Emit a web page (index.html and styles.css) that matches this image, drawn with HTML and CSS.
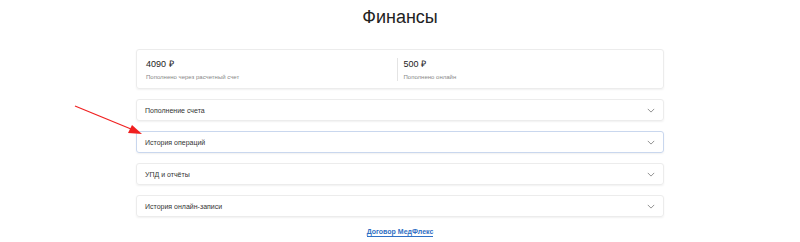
FILE: index.html
```html
<!DOCTYPE html>
<html lang="ru">
<head>
    <meta charset="UTF-8">
    <meta name="viewport" content="width=device-width, initial-scale=1.0">
    <title>Финансы</title>
    <link rel="stylesheet" href="styles.css">
</head>
<body>
    <div class="page">
        <h1 class="title">Финансы</h1>

        <div class="summary">
            <div class="summary-item">
                <div class="amount">4090 ₽</div>
                <div class="label">Пополнено через расчетный счет</div>
            </div>
            <div class="summary-item divided">
                <div class="amount">500 ₽</div>
                <div class="label">Пополнено онлайн</div>
            </div>
        </div>

        <div class="accordion">
            <div class="acc-item">
                <span>Пополнение счета</span>
                <svg class="chevron" viewBox="0 0 10 6"><path d="M1 1l4 4 4-4" /></svg>
            </div>
            <div class="acc-item active">
                <span>История операций</span>
                <svg class="chevron" viewBox="0 0 10 6"><path d="M1 1l4 4 4-4" /></svg>
            </div>
            <div class="acc-item">
                <span>УПД и отчёты</span>
                <svg class="chevron" viewBox="0 0 10 6"><path d="M1 1l4 4 4-4" /></svg>
            </div>
            <div class="acc-item">
                <span>История онлайн-записи</span>
                <svg class="chevron" viewBox="0 0 10 6"><path d="M1 1l4 4 4-4" /></svg>
            </div>
        </div>

        <a class="contract" href="#">Договор МедФлекс</a>
    </div>

    <svg class="pointer" width="800" height="242" viewBox="0 0 800 242">
        <line x1="75" y1="106" x2="131" y2="129" stroke="#f02020" stroke-width="1.2" />
        <polygon points="142,134 128,133 132,125" fill="#f02020" />
    </svg>
</body>
</html>
```

FILE: styles.css
```css
body {
    margin: 0;
    padding: 0;
    font-family: "Liberation Sans", Arial, sans-serif;
    background-color: #fff;
    color: #222;
    overflow: hidden;
}

.page {
    width: 528px;
    margin: 0 auto;
    display: flex;
    flex-direction: column;
    align-items: stretch;
}

.title {
    margin: 5px 0 0;
    height: 27px;
    font-size: 18px;
    font-weight: 400;
    line-height: 24px;
    text-align: center;
    color: #222;
}

.summary {
    margin-top: 17px;
    height: 40px;
    box-sizing: border-box;
    border: 1px solid #ececec;
    border-radius: 3px;
    box-shadow: 0 1px 2px rgba(0, 0, 0, 0.06);
    display: flex;
    align-items: center;
    padding: 0 9px;
}

.summary-item {
    flex: 1;
    display: flex;
    flex-direction: column;
    gap: 3px;
}

.summary-item.divided {
    border-left: 1px solid #e4e4e4;
    padding-left: 6px;
}

.amount {
    font-size: 9px;
    line-height: 12px;
    color: #222;
}

.label {
    font-size: 6px;
    line-height: 8px;
    color: #888;
}

.accordion {
    margin-top: 10px;
    display: flex;
    flex-direction: column;
    gap: 10px;
}

.acc-item {
    height: 22px;
    box-sizing: border-box;
    border: 1px solid #ececec;
    border-radius: 3px;
    box-shadow: 0 1px 2px rgba(0, 0, 0, 0.06);
    display: flex;
    align-items: center;
    justify-content: space-between;
    padding: 0 8px;
    font-size: 7px;
    color: #333;
}

.acc-item.active {
    border-color: #c9d7ee;
}

.chevron {
    width: 8px;
    height: 5px;
    fill: none;
    stroke: #777;
    stroke-width: 1;
}

.contract {
    margin-top: 11px;
    align-self: center;
    font-size: 7px;
    line-height: 8px;
    font-weight: 700;
    color: #2f6fc4;
    text-decoration: none;
    border-bottom: 1px solid #2f6fc4;
}

.pointer {
    position: absolute;
    top: 0;
    left: 0;
    pointer-events: none;
}
```
